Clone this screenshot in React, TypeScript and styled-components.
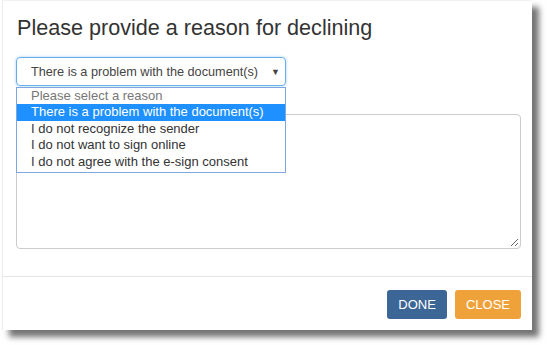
import React from "react";
import styled, { createGlobalStyle } from "styled-components";

const Global = createGlobalStyle`
  html, body { margin: 0; padding: 0; background: #ffffff; }
  body { font-family: "Liberation Sans", Arial, sans-serif; color: #333; }
  * { box-sizing: border-box; }
`;

const Stage = styled.div`
  width: 547px;
  height: 345px;
  padding: 0 0 0 2px;
  overflow: hidden;
`;

const Dialog = styled.div`
  width: 530px;
  height: 330px;
  background: #fff;
  border-left: 1px solid #ececec;
  border-top: 1px solid #f2f2f2;
  box-shadow: 7px 7px 6px rgba(0, 0, 0, 0.55);
  display: flex;
  flex-direction: column;
`;

const Header = styled.div`
  padding: 14px 14px 0 14px;
  height: 50px;
`;

const Title = styled.h4`
  margin: 0;
  font-size: 21.6px;
  font-weight: 400;
  line-height: 26px;
  color: #333;
`;

const Body = styled.div`
  padding: 6px 11px 0 13px;
  display: flex;
  flex-direction: column;
  gap: 28px;
  height: 225px;
`;

const SelectWrap = styled.div`
  position: relative;
  width: 270px;
`;

const SelectBox = styled.div`
  height: 29px;
  border: 1px solid #66afe9;
  border-radius: 4px;
  box-shadow: 0 0 3px rgba(102, 175, 233, 0.6);
  display: flex;
  align-items: center;
  justify-content: space-between;
  padding: 0 5px 0 14px;
  font-size: 12.7px;
  color: #444;
`;

const Arrow = styled.span`
  font-size: 9px;
  color: #444;
`;

const OptionList = styled.ul`
  position: absolute;
  left: 0;
  top: 30px;
  width: 270px;
  margin: 0;
  padding: 0 0 2px 0;
  list-style: none;
  background: #fff;
  border: 1px solid #7ea6e0;
  z-index: 2;
`;

const Option = styled.li<{ $selected?: boolean; $placeholder?: boolean }>`
  height: 16.4px;
  line-height: 16px;
  padding-left: 14px;
  font-size: 13px;
  white-space: nowrap;
  background: ${(p) => (p.$selected ? "#1e90ff" : "transparent")};
  color: ${(p) => (p.$selected ? "#fff" : p.$placeholder ? "#777" : "#333")};
`;

const TextArea = styled.div`
  position: relative;
  height: 135px;
  border: 1px solid #ccc;
  border-radius: 4px;
`;

const Grip = styled.svg`
  position: absolute;
  right: 1px;
  bottom: 1px;
`;

const Footer = styled.div`
  border-top: 1px solid #e5e5e5;
  display: flex;
  justify-content: flex-end;
  gap: 8px;
  padding: 13px 11px 0 0;
  height: 54px;
`;

const Button = styled.button<{ $tone: "primary" | "warning" }>`
  height: 29px;
  padding: 0 11px;
  border: none;
  border-radius: 3px;
  font-family: "Liberation Sans", Arial, sans-serif;
  font-size: 13px;
  color: #fff;
  background: ${(p) => (p.$tone === "primary" ? "#3b6696" : "#f0a23a")};
`;

export default function App() {
  return (
    <>
      <Global />
      <Stage>
        <Dialog>
          <Header>
            <Title>Please provide a reason for declining</Title>
          </Header>
          <Body>
            <SelectWrap>
              <SelectBox>
                <span>There is a problem with the document(s)</span>
                <Arrow>▼</Arrow>
              </SelectBox>
              <OptionList>
                <Option $placeholder>Please select a reason</Option>
                <Option $selected>There is a problem with the document(s)</Option>
                <Option>I do not recognize the sender</Option>
                <Option>I do not want to sign online</Option>
                <Option>I do not agree with the e-sign consent</Option>
              </OptionList>
            </SelectWrap>
            <TextArea>
              <Grip width="10" height="10" viewBox="0 0 10 10">
                <line x1="9" y1="2" x2="2" y2="9" stroke="#666" strokeWidth="1" />
                <line x1="9" y1="6" x2="6" y2="9" stroke="#666" strokeWidth="1" />
              </Grip>
            </TextArea>
          </Body>
          <Footer>
            <Button $tone="primary">DONE</Button>
            <Button $tone="warning">CLOSE</Button>
          </Footer>
        </Dialog>
      </Stage>
    </>
  );
}
